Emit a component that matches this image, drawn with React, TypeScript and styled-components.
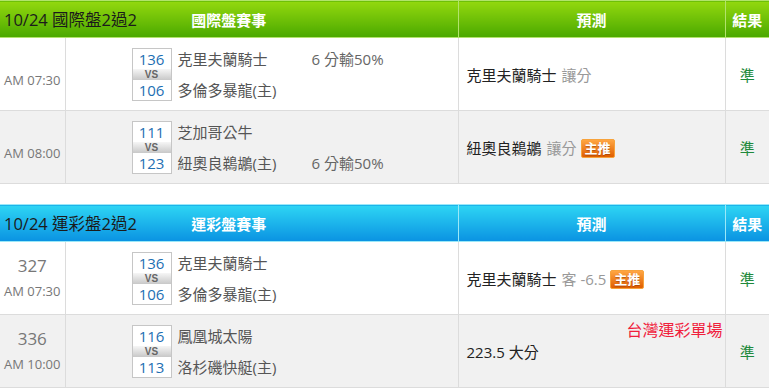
import styled, { createGlobalStyle } from "styled-components";

type Tone = "green" | "blue";

interface Game {
  no?: string;
  time: string;
  home: [string, string];
  away: [string, string];
  odds?: { line: 0 | 1; text: string };
  pick: string;
  hint?: string;
  featured?: boolean;
  tag?: string;
  result: string;
}

interface BoardData {
  tone: Tone;
  title: string;
  event: string;
  games: Game[];
}

const TONES = {
  green: { top: "#93d80e", bottom: "#4aa800", line: "#b2e36c" },
  blue: { top: "#2ed5f4", bottom: "#0a92e2", line: "#9ae8f8" },
};

const BOARDS: BoardData[] = [
  {
    tone: "green",
    title: "10/24 國際盤2過2",
    event: "國際盤賽事",
    games: [
      {
        time: "AM 07:30",
        home: ["136", "克里夫蘭騎士"],
        away: ["106", "多倫多暴龍(主)"],
        odds: { line: 0, text: "6 分輸50%" },
        pick: "克里夫蘭騎士",
        hint: "讓分",
        result: "準",
      },
      {
        time: "AM 08:00",
        home: ["111", "芝加哥公牛"],
        away: ["123", "紐奧良鵜鶘(主)"],
        odds: { line: 1, text: "6 分輸50%" },
        pick: "紐奧良鵜鶘",
        hint: "讓分",
        featured: true,
        result: "準",
      },
    ],
  },
  {
    tone: "blue",
    title: "10/24 運彩盤2過2",
    event: "運彩盤賽事",
    games: [
      {
        no: "327",
        time: "AM 07:30",
        home: ["136", "克里夫蘭騎士"],
        away: ["106", "多倫多暴龍(主)"],
        pick: "克里夫蘭騎士",
        hint: "客 -6.5",
        featured: true,
        result: "準",
      },
      {
        no: "336",
        time: "AM 10:00",
        home: ["116", "鳳凰城太陽"],
        away: ["113", "洛杉磯快艇(主)"],
        pick: "223.5 大分",
        tag: "台灣運彩單場",
        result: "準",
      },
    ],
  },
];

export default function App() {
  return (
    <>
      <GlobalStyle />
      <Page>
        {BOARDS.map((board) => (
          <Board key={board.title}>
            <colgroup>
              <col style={{ width: 65 }} />
              <col style={{ width: 393 }} />
              <col style={{ width: 267 }} />
              <col style={{ width: 44 }} />
            </colgroup>
            <thead>
              <tr>
                <HeadCell $tone={board.tone} colSpan={2}>
                  <HeadSplit>
                    <BoardTitle>{board.title}</BoardTitle>
                    <span>{board.event}</span>
                    <span />
                  </HeadSplit>
                </HeadCell>
                <HeadCell $tone={board.tone}>預測</HeadCell>
                <HeadCell $tone={board.tone}>結果</HeadCell>
              </tr>
            </thead>
            <tbody>
              {board.games.map((game, i) => (
                <Row key={game.time} $shade={i % 2 === 1}>
                  {/* Time */}
                  <TimeCell>
                    {game.no ? <GameNo>{game.no}</GameNo> : null}
                    <Clock $solo={!game.no}>{game.time}</Clock>
                  </TimeCell>
                  {/* Matchup */}
                  <MatchCell>
                    <Matchup>
                      <ScoreBox>
                        <ScoreNum>{game.home[0]}</ScoreNum>
                        <Versus>VS</Versus>
                        <ScoreNum>{game.away[0]}</ScoreNum>
                      </ScoreBox>
                      <Lines $width={128}>
                        <TeamName>{game.home[1]}</TeamName>
                        <TeamName>{game.away[1]}</TeamName>
                      </Lines>
                      {game.odds && (
                        <Lines $width={90}>
                          <Odds>{game.odds.line === 0 ? game.odds.text : ""}</Odds>
                          <Odds>{game.odds.line === 1 ? game.odds.text : ""}</Odds>
                        </Lines>
                      )}
                    </Matchup>
                  </MatchCell>
                  {/* Prediction */}
                  <PickCell>
                    {game.tag && <Tag>{game.tag}</Tag>}
                    {game.pick}
                    {game.hint && <Hint>{game.hint}</Hint>}
                    {game.featured && <Badge>主推</Badge>}
                  </PickCell>
                  <ResultCell>{game.result}</ResultCell>
                </Row>
              ))}
            </tbody>
          </Board>
        ))}
      </Page>
    </>
  );
}

const GlobalStyle = createGlobalStyle`
  body {
    margin: 0;
    background: #fff;
    font-family: "Open Sans", "Noto Sans CJK TC", sans-serif;
  }
`;

const Page = styled.div`
  width: 769px;
`;

const Board = styled.table`
  width: 769px;
  border-collapse: collapse;
  table-layout: fixed;

  & + & {
    margin-top: 20px;
  }
`;

const HeadCell = styled.th<{ $tone: Tone }>`
  height: 36px;
  padding: 0;
  background: linear-gradient(${(p) => TONES[p.$tone].top}, ${(p) => TONES[p.$tone].bottom});
  border-top: 1px solid ${(p) => TONES[p.$tone].line};
  border-bottom: 1px solid ${(p) => TONES[p.$tone].line};
  border-left: 1px solid ${(p) => TONES[p.$tone].line};
  color: #fff;
  font-size: 15px;
  font-weight: bold;
  text-align: center;
  white-space: nowrap;

  &:first-child {
    border-left: none;
  }
`;

const HeadSplit = styled.div`
  display: grid;
  grid-template-columns: 1fr auto 1fr;
  align-items: center;
`;

const BoardTitle = styled.span`
  padding-left: 4px;
  text-align: left;
  color: #1b1b1b;
  font-size: 16.5px;
  font-weight: normal;
`;

const Row = styled.tr<{ $shade: boolean }>`
  height: 73px;
  background: ${(p) => (p.$shade ? "#f1f1f1" : "#fff")};

  td {
    padding: 0;
    border: 1px solid #dcdcdc;
  }

  td:first-child {
    border-left: none;
  }

  td:last-child {
    border-right: none;
  }
`;

const TimeCell = styled.td`
  text-align: center;
  color: #777;
`;

const GameNo = styled.div`
  font-size: 17px;
  line-height: 24px;
  margin-bottom: 2px;
`;

const Clock = styled.div<{ $solo: boolean }>`
  font-size: 13px;
  line-height: 22px;
  padding-top: ${(p) => (p.$solo ? "11px" : "0")};
`;

const MatchCell = styled.td``;

const Matchup = styled.div`
  display: flex;
  align-items: center;
  padding-left: 66px;
`;

const ScoreBox = styled.div`
  display: flex;
  flex-direction: column;
  width: 38px;
  border: 1px solid #c6c6c6;
  background: #fff;
`;

const ScoreNum = styled.div`
  height: 20px;
  line-height: 20px;
  text-align: center;
  color: #1d6fb3;
  font-size: 15px;
`;

const Versus = styled.div`
  height: 11px;
  line-height: 11px;
  text-align: center;
  font-family: "Liberation Sans", sans-serif;
  font-size: 10px;
  font-weight: bold;
  color: #666;
  background: linear-gradient(#f6f6f6, #c8c8c8);
`;

const Lines = styled.div<{ $width: number }>`
  display: flex;
  flex-direction: column;
  justify-content: space-between;
  width: ${(p) => p.$width}px;
  height: 53px;
  margin-left: 6px;
  white-space: nowrap;
`;

const TeamName = styled.div`
  height: 22px;
  line-height: 22px;
  font-size: 15px;
  color: #555;
`;

const Odds = styled(TeamName)`
  color: #666;
`;

const PickCell = styled.td`
  position: relative;
  padding-left: 8px !important;
  font-size: 15px;
  color: #222;
  white-space: nowrap;
`;

const Hint = styled.span`
  margin-left: 5px;
  color: #999;
`;

const Badge = styled.span`
  display: inline-block;
  margin-left: 4px;
  padding: 0 3px;
  height: 17px;
  line-height: 17px;
  vertical-align: 1px;
  font-size: 13px;
  font-weight: bold;
  color: #fff;
  background: linear-gradient(#ffa643, #e05e00);
  border: 1px solid #f7a33c;
  border-radius: 2px;
  text-shadow: 0 1px 1px rgba(120, 40, 0, 0.5);
`;

const Tag = styled.span`
  position: absolute;
  top: 6px;
  right: 2px;
  line-height: 18px;
  font-size: 16px;
  color: #f0203c;
`;

const ResultCell = styled.td`
  text-align: center;
  font-size: 15px;
  color: #1f8a3c;
`;
